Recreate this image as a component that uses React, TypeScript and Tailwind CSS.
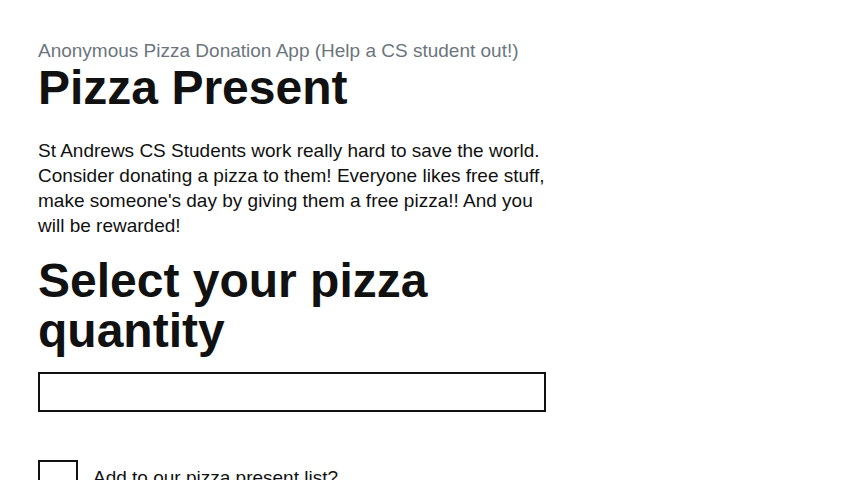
export default function App() {
  return (
    <div className="min-h-screen bg-white text-[#111] font-['Liberation_Sans',Arial,sans-serif]">
      <div className="pl-[38px] pt-[39px] max-w-[546px]">
        <p className="text-[19px] leading-[24px] text-[#6c757d]">
          Anonymous Pizza Donation App (Help a CS student out!)
        </p>
        <h1 className="text-[48px] leading-[50px] font-bold">Pizza Present</h1>
        <p className="mt-[25px] text-[19px] leading-[25px]">
          St Andrews CS Students work really hard to save the world. Consider donating a pizza to them!
          Everyone likes free stuff, make someone's day by giving them a free pizza!! And you will be rewarded!
        </p>
        <h2 className="mt-[18px] text-[48px] leading-[50px] font-bold">Select your pizza quantity</h2>
        <input
          type="text"
          className="mt-[16px] block w-full h-[40px] border-2 border-[#111] px-2 text-[19px] outline-none"
        />
        <label className="mt-[48px] flex items-start gap-[15px]">
          <input type="checkbox" className="appearance-none w-[40px] h-[40px] border-2 border-[#111] shrink-0" />
          <span className="mt-[6px] text-[19px] leading-[24px]">Add to our pizza present list?</span>
        </label>
      </div>
    </div>
  );
}
